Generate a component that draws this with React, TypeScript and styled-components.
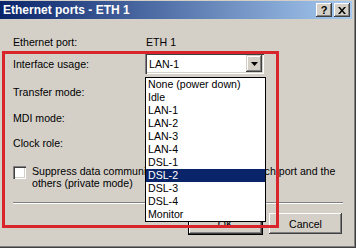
import styled, { createGlobalStyle } from 'styled-components';

const GlobalStyle = createGlobalStyle`
  html, body {
    margin: 0;
    padding: 0;
    background: #d4d0c8;
  }
  body {
    font-family: 'Liberation Sans', Arial, sans-serif;
    font-size: 10.6px;
    color: #000;
  }
`;

const Window = styled.div`
  position: relative;
  width: 356px;
  height: 248px;
  box-sizing: border-box;
  background: #d4d0c8;
  border-right: 1px solid #404040;
  border-bottom: 1px solid #404040;
  box-shadow: inset -1px -1px 0 #808080;
  padding: 1px 3px 0 0;
  display: flex;
  flex-direction: column;
`;

const TitleBar = styled.div`
  height: 18px;
  display: flex;
  align-items: center;
  background: linear-gradient(to right, #0a246a, #a6caf0);
  padding: 0 2px 0 3px;
`;

const TitleText = styled.div`
  flex: 1;
  color: #fff;
  font-weight: bold;
  font-size: 12px;
  white-space: nowrap;
`;

const CaptionButton = styled.div<{ $gap?: number }>`
  width: 16px;
  height: 14px;
  box-sizing: border-box;
  margin-left: ${(p) => p.$gap ?? 0}px;
  background: #d4d0c8;
  box-shadow: inset -1px -1px 0 #404040, inset 1px 1px 0 #fff,
    inset -2px -2px 0 #808080;
  display: flex;
  align-items: center;
  justify-content: center;
  font-weight: bold;
  font-size: 11px;
  line-height: 14px;
`;

const Body = styled.div`
  display: flex;
  flex-direction: column;
  padding: 0 9px 0 13px;
`;

const Row = styled.div<{ $h: number; $mt: number }>`
  display: flex;
  align-items: center;
  height: ${(p) => p.$h}px;
  margin-top: ${(p) => p.$mt}px;
`;

const Label = styled.div`
  width: 132px;
  flex-shrink: 0;
`;

const Value = styled.div`
  padding-left: 1px;
`;

const Combo = styled.div`
  position: relative;
  width: 119px;
  height: 21px;
  box-sizing: border-box;
  background: #fff;
  box-shadow: inset 1px 1px 0 #808080, inset 2px 2px 0 #404040,
    inset -1px -1px 0 #fff, inset -2px -2px 0 #d4d0c8;
  display: flex;
  align-items: center;
  padding: 2px 2px 2px 4px;
`;

const ComboText = styled.div`
  flex: 1;
`;

const ArrowButton = styled.div`
  width: 16px;
  height: 17px;
  box-sizing: border-box;
  background: #d4d0c8;
  box-shadow: inset -1px -1px 0 #404040, inset 1px 1px 0 #d4d0c8,
    inset -2px -2px 0 #808080, inset 2px 2px 0 #fff;
  display: flex;
  align-items: center;
  justify-content: center;
`;

const ListBox = styled.div`
  position: absolute;
  left: 0;
  top: calc(100% + 3px);
  width: 121px;
  box-sizing: border-box;
  border: 1px solid #000;
  background: #fff;
  z-index: 3;
`;

const ListItem = styled.div<{ $selected?: boolean }>`
  height: 13px;
  line-height: 13px;
  padding-left: 2px;
  white-space: nowrap;
  background: ${(p) => (p.$selected ? '#0a246a' : 'transparent')};
  color: ${(p) => (p.$selected ? '#fff' : '#000')};
`;

const CheckRow = styled.div`
  display: flex;
  align-items: flex-start;
  margin-top: 11px;
  gap: 6px;
`;

const CheckBox = styled.div`
  width: 13px;
  height: 13px;
  margin-top: 1px;
  flex-shrink: 0;
  box-sizing: border-box;
  background: #fff;
  box-shadow: inset 1px 1px 0 #808080, inset 2px 2px 0 #404040,
    inset -1px -1px 0 #fff, inset -2px -2px 0 #d4d0c8;
`;

const CheckLabel = styled.div`
  width: 305px;
  line-height: 12px;
`;

const Separator = styled.div`
  margin-top: 13px;
  height: 0;
  border-top: 1px solid #808080;
  border-bottom: 1px solid #fff;
`;

const ButtonRow = styled.div`
  display: flex;
  justify-content: flex-end;
  gap: 5px;
  margin-top: 8px;
`;

const Button = styled.div<{ $default?: boolean }>`
  width: 75px;
  height: 23px;
  box-sizing: border-box;
  background: #d4d0c8;
  border: 1px solid ${(p) => (p.$default ? '#000' : 'transparent')};
  box-shadow: inset -1px -1px 0 #404040, inset 1px 1px 0 #fff,
    inset -2px -2px 0 #808080;
  display: flex;
  align-items: center;
  justify-content: center;
`;

const Highlight = styled.div`
  position: absolute;
  left: 2px;
  top: 51px;
  width: 277px;
  height: 177px;
  box-sizing: border-box;
  border: 3px solid #d8242b;
  pointer-events: none;
  z-index: 2;
`;

const usages = [
  'None (power down)',
  'Idle',
  'LAN-1',
  'LAN-2',
  'LAN-3',
  'LAN-4',
  'DSL-1',
  'DSL-2',
  'DSL-3',
  'DSL-4',
  'Monitor',
];

export default function App() {
  return (
    <>
      <GlobalStyle />
      <Window>
        <TitleBar>
          <TitleText>Ethernet ports - ETH 1</TitleText>
          <CaptionButton>?</CaptionButton>
          <CaptionButton $gap={2}>
            <svg width="8" height="7" viewBox="0 0 8 7">
              <path d="M0 0h2l2 2.5L6 0h2L5 3.5 8 7H6L4 4.5 2 7H0l3-3.5z" fill="#000" />
            </svg>
          </CaptionButton>
        </TitleBar>
        <Body>
          <Row $h={22} $mt={12}>
            <Label>Ethernet port:</Label>
            <Value>ETH 1</Value>
          </Row>
          <Row $h={21} $mt={0}>
            <Label>Interface usage:</Label>
            <Combo>
              <ComboText>LAN-1</ComboText>
              <ArrowButton>
                <svg width="7" height="4" viewBox="0 0 7 4">
                  <path d="M0 0h7L3.5 4z" fill="#000" />
                </svg>
              </ArrowButton>
              <ListBox>
                {usages.map((u) => (
                  <ListItem key={u} $selected={u === 'DSL-2'}>
                    {u}
                  </ListItem>
                ))}
              </ListBox>
            </Combo>
          </Row>
          <Row $h={22} $mt={7}>
            <Label>Transfer mode:</Label>
          </Row>
          <Row $h={22} $mt={4}>
            <Label>MDI mode:</Label>
          </Row>
          <Row $h={22} $mt={3}>
            <Label>Clock role:</Label>
          </Row>
          <CheckRow>
            <CheckBox />
            <CheckLabel>
              Suppress data communication between each switch port and the
              others (private mode)
            </CheckLabel>
          </CheckRow>
          <Separator />
          <ButtonRow>
            <Button $default>OK</Button>
            <Button>Cancel</Button>
          </ButtonRow>
        </Body>
        <Highlight />
      </Window>
    </>
  );
}
